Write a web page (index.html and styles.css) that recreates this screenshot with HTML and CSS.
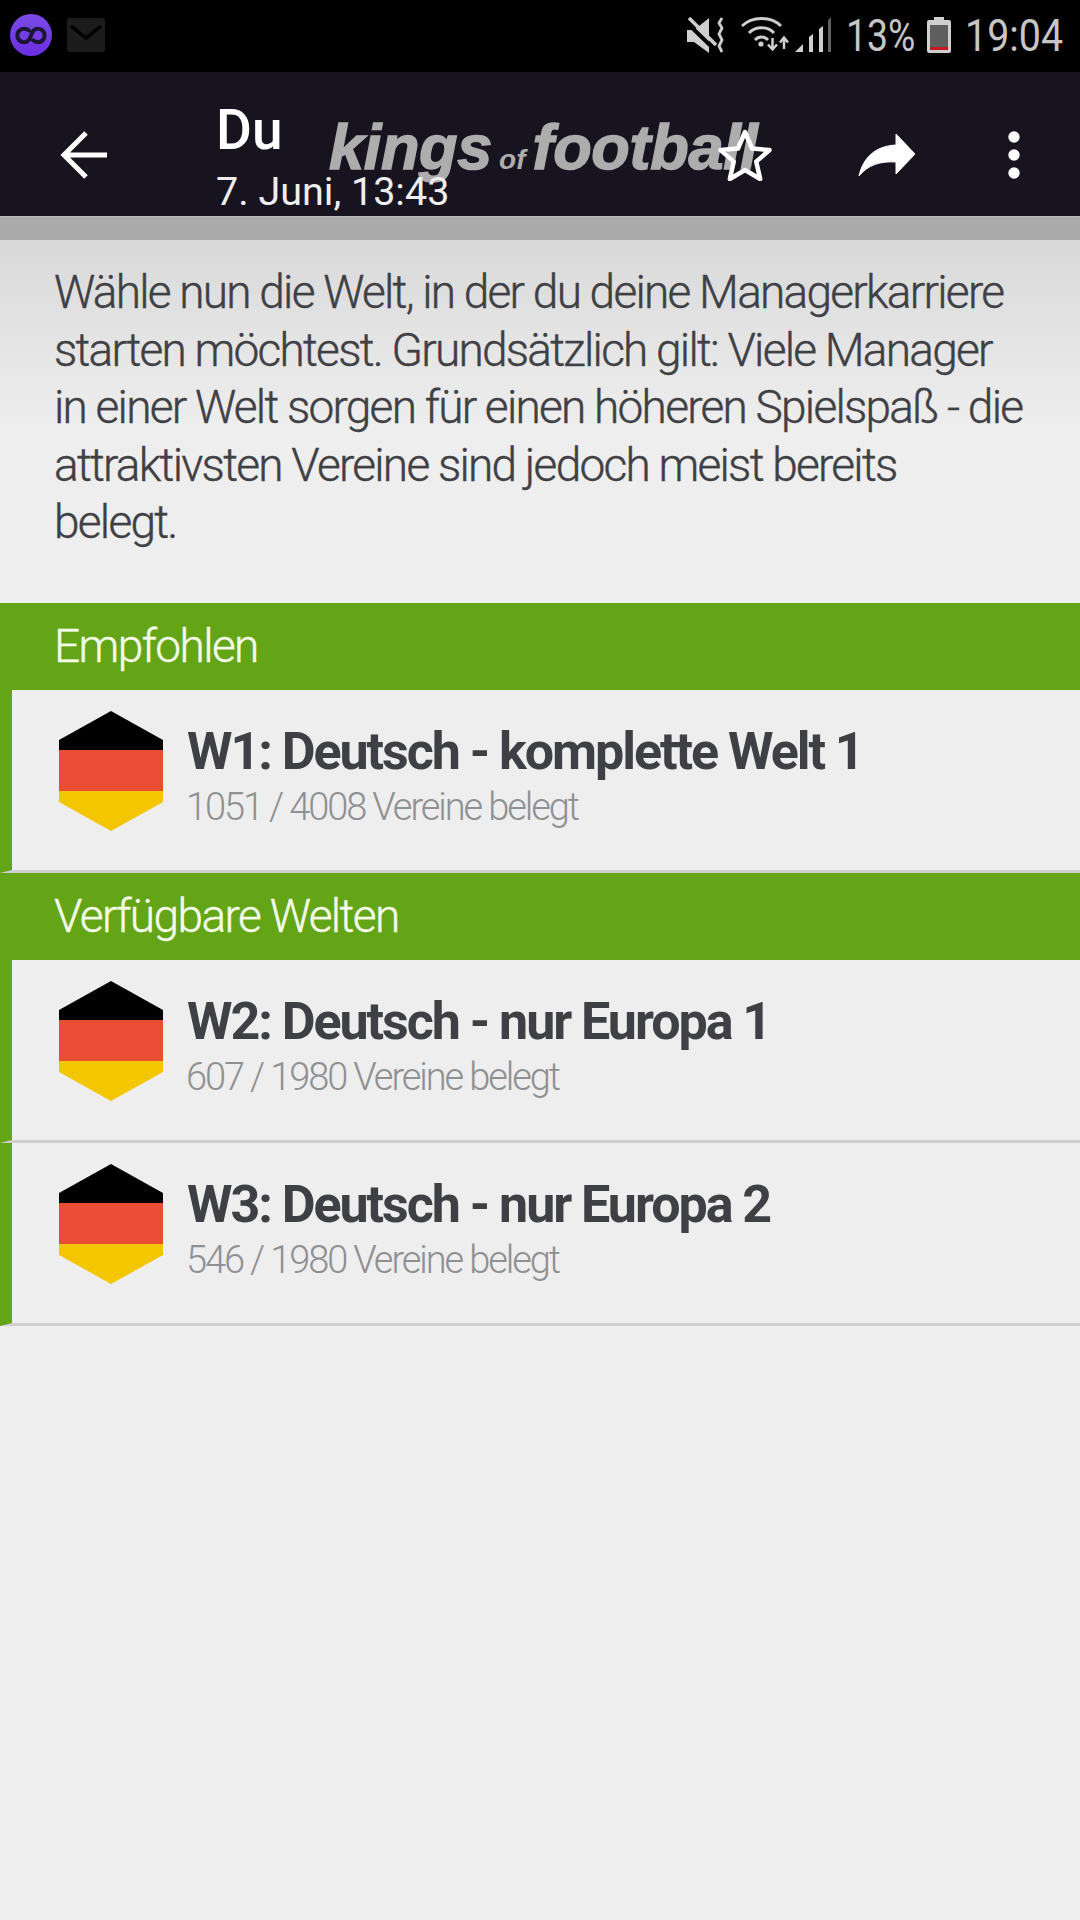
FILE: index.html
```html
<!DOCTYPE html>
<html lang="de">
<head>
<meta charset="utf-8">
<title>Welt wählen</title>
<link rel="stylesheet" href="styles.css">
</head>
<body>
<svg class="defs" width="0" height="0" aria-hidden="true">
  <symbol id="flag" viewBox="0 0 104 120">
    <polygon points="52,0 104,29 104,39 0,39 0,29" fill="#000"/>
    <rect x="0" y="39" width="104" height="41" fill="#e94e34"/>
    <polygon points="0,80 104,80 104,91 52,120 0,91" fill="#f4c600"/>
  </symbol>
</svg>
<div class="status">
  <div class="status-left">
    <svg class="ic-app" viewBox="0 0 42 42"><defs><linearGradient id="pg" x1="0" y1="0" x2="0" y2="1"><stop offset="0" stop-color="#7c4be8"/><stop offset="1" stop-color="#6a2fe0"/></linearGradient></defs><circle cx="21" cy="21" r="21" fill="url(#pg)"/><path d="M19 16.500C17.500 15.200 16 14.800 14 14.800a6.700 6.700 0 0 0 0 13.400C18 28.200 20 25 21 21.500S24 14.800 28 14.800a6.700 6.700 0 0 1 0 13.400C26 28.200 24.500 27.500 23 26.300" fill="none" stroke="#1c1534" stroke-width="4" stroke-linecap="round"/></svg>
    <svg class="ic-mail" viewBox="0 0 38 34"><rect width="38" height="34" rx="2" fill="#1c1c1c"/><path d="M4 8l15 12L34 8" fill="none" stroke="#000" stroke-width="3.500"/></svg>
  </div>
  <div class="status-right">
    <svg class="ic-mute" viewBox="0 0 38 36"><path d="M0 13h7L22 1v35L7 25H0z" fill="#cfcfcf"/><path d="M0 6l26 25" stroke="#000" stroke-width="4"/><path d="M2 1l27 27" stroke="#cfcfcf" stroke-width="3.500"/><path d="M35 1l-3 5 3 5-3 6 3 6-3 6 3 6" fill="none" stroke="#cfcfcf" stroke-width="2.800"/></svg>
    <svg class="ic-wifi" viewBox="0 0 49 36"><g fill="none" stroke="#cfcfcf" stroke-width="2.800"><path d="M1 9C11-1 30-1 40 9"/><path d="M8 16C14 9 27 9 33 16"/><path d="M14 23c3.500-4 9.500-4 13 0"/></g><circle cx="20" cy="27" r="2.600" fill="#cfcfcf"/><path d="M31.500 21v11M27 27.500l4.500 5 4.500-5" fill="none" stroke="#cfcfcf" stroke-width="2.500"/><path d="M43 32V21M39 25.500l4-5 4 5" fill="none" stroke="#cfcfcf" stroke-width="2.500"/></svg>
    <svg class="ic-signal" viewBox="0 0 37 36"><path d="M0 35l8-8v8z" fill="#cfcfcf"/><path d="M14 20l4-3v18h-4z" fill="#cfcfcf"/><path d="M24 12l4-3v26h-4z" fill="#cfcfcf"/><path d="M33 3l3-3v35h-3z" fill="#5f5f5f"/></svg>
    <span class="pct">13%</span>
    <svg class="ic-batt" viewBox="0 0 24 36"><path d="M7 0h10v3h5a2 2 0 0 1 2 2v29a2 2 0 0 1-2 2H2a2 2 0 0 1-2-2V5a2 2 0 0 1 2-2h5z" fill="#cfcfcf"/><rect x="3" y="8" width="18" height="25" fill="#5e5e5e"/><rect x="3" y="30" width="18" height="3" fill="#c8161c"/></svg>
    <span class="clock">19:04</span>
  </div>
</div>

<header class="appbar">
  <svg class="ic-back" viewBox="0 0 48 48"><path d="M47 24H4M26 2L4 24l22 22" fill="none" stroke="#fff" stroke-width="5"/></svg>
  <div class="who">
    <div class="who-name">Du</div>
    <div class="who-date">7. Juni, 13:43</div>
  </div>
  <svg class="ic-star" viewBox="0 0 54 52"><path d="M27 3l7 16.500 17.500 1.600-13.300 11.500 4 17.400L27 41l-15.200 9 4-17.400L2.500 21.100 20 19.500z" fill="none" stroke="#fff" stroke-width="4.500" stroke-linejoin="round"/></svg>
  <svg class="ic-share" viewBox="0 0 58 44"><path d="M38 1l19 20-19 20V29C22 28 10 32 1 43 5 25 17 13 38 12z" fill="#fff" stroke="#fff" stroke-width="1" stroke-linejoin="round"/></svg>
  <svg class="ic-more" viewBox="0 0 12 48"><circle cx="6" cy="6" r="5.700" fill="#fff"/><circle cx="6" cy="24" r="5.700" fill="#fff"/><circle cx="6" cy="42" r="5.700" fill="#fff"/></svg>
  <div class="logo"><span>kings</span><span class="logo-of">of</span><span>football</span></div>
</header>
<div class="shade"></div>

<main>
  <p class="intro">Wähle nun die Welt, in der du deine Managerkarriere starten möchtest. Grundsätzlich gilt: Viele Manager in einer Welt sorgen für einen höheren Spielspaß - die attraktivsten Vereine sind jedoch meist bereits belegt.</p>

  <section class="group">
    <h2 class="group-title">Empfohlen</h2>
    <div class="world">
      <svg class="flag"><use href="#flag"/></svg>
      <div class="world-text">
        <div class="world-name">W1: Deutsch - komplette Welt 1</div>
        <div class="world-count">1051 / 4008 Vereine belegt</div>
      </div>
    </div>
  </section>

  <section class="group">
    <h2 class="group-title">Verfügbare Welten</h2>
    <div class="world">
      <svg class="flag"><use href="#flag"/></svg>
      <div class="world-text">
        <div class="world-name">W2: Deutsch - nur Europa 1</div>
        <div class="world-count">607 / 1980 Vereine belegt</div>
      </div>
    </div>
    <div class="world">
      <svg class="flag"><use href="#flag"/></svg>
      <div class="world-text">
        <div class="world-name">W3: Deutsch - nur Europa 2</div>
        <div class="world-count">546 / 1980 Vereine belegt</div>
      </div>
    </div>
  </section>
</main>
</body>
</html>
```
FILE: styles.css
```css
* { box-sizing: border-box; }
html, body { margin: 0; padding: 0; }
body {
  width: 1080px;
  height: 1920px;
  overflow: hidden;
  background: #eeeeee;
  font-family: Roboto, "Liberation Sans", sans-serif;
  color: #3f4044;
}
.defs { position: absolute; }

.status {
  height: 72px;
  background: #000;
  display: flex;
  justify-content: space-between;
  align-items: flex-start;
  color: #c6c6c6;
}
.status-left { display: flex; align-items: center; gap: 15px; padding: 14px 0 0 10px; }
.ic-app { width: 42px; height: 42px; display: block; }
.ic-mail { width: 38px; height: 34px; display: block; }
.status-right { display: flex; align-items: center; padding: 17px 19px 0 0; height: 53px; }
.ic-mute { width: 38px; height: 36px; margin-right: 16px; flex: none; }
.ic-wifi { width: 49px; height: 36px; margin-right: 5px; flex: none; }
.ic-signal { width: 37px; height: 36px; margin-right: 14px; flex: none; }
.pct {
  font-size: 45px;
  line-height: 38px;
  width: 67px;
  padding-top: 2px;
  white-space: nowrap;
  transform-origin: left;
  transform: scaleX(.83);
  margin-right: 14px;
}
.ic-batt { width: 24px; height: 36px; margin-right: 14px; flex: none; }
.clock {
  font-size: 45px;
  line-height: 38px;
  width: 96px;
  padding-top: 2px;
  white-space: nowrap;
  transform-origin: left;
  transform: scaleX(.875);
}

.appbar {
  position: relative;
  height: 144px;
  padding-top: 22px;
  background: #18141f;
  display: flex;
  align-items: center;
  color: #fff;
}
.ic-back { width: 48px; height: 48px; margin-left: 60px; flex: none; }
.who { margin-left: 108px; flex: 1; position: relative; z-index: 1; align-self: flex-start; margin-top: 6px; }
.who-name { font-size: 55px; font-weight: 500; line-height: 60px; }
.who-date { font-size: 39.5px; line-height: 50px; margin-top: 7px; color: #eeeeee; }
.logo {
  position: absolute;
  left: 329px;
  top: 39px;
  display: flex;
  align-items: baseline;
  font-family: "Liberation Sans", sans-serif;
  font-style: italic;
  font-weight: 700;
  font-size: 63px;
  letter-spacing: -0.3px;
  -webkit-text-stroke: 1.5px #adadad;
  color: #adadad;
  line-height: 72px;
  white-space: nowrap;
}
.logo-of { font-size: 28px; font-weight: 700; letter-spacing: 0; -webkit-text-stroke: 0; margin: 0 7px 0 7px; }
.ic-star, .ic-share, .ic-more { position: relative; z-index: 1; flex: none; }
.ic-star { width: 54px; height: 52px; margin-right: 86px; }
.ic-share { width: 58px; height: 44px; margin-right: 92px; }
.ic-more { width: 12px; height: 48px; margin-right: 60px; }

.shade { height: 24px; background: #ababab; border-top: 1px solid #bdbdbd; }

main { display: block; }
.intro {
  margin: 0;
  height: 363px;
  padding: 24px 54px 0 54px;
  font-size: 46px;
  font-weight: 300;
  line-height: 57.5px;
  letter-spacing: -1.75px;
  -webkit-text-stroke: 0.4px #3f4044;
  color: #3f4044;
  background: linear-gradient(#d9d9d9, #eeeeee 52%);
}

.group { background: #63a516; }
.group-title {
  margin: 0;
  height: 87px;
  padding-left: 54px;
  font-size: 46px;
  font-weight: 300;
  line-height: 87px;
  letter-spacing: -1.6px;
  -webkit-text-stroke: 0.4px #f4fbe8;
  color: #f4fbe8;
}
.world {
  height: 183px;
  background: #eeeeee;
  display: flex;
  align-items: flex-start;
  padding: 21px 0 0 47px;
  border-left: 12px solid #63a516;
  border-bottom: 3px solid #cfcfcf;
}
.flag { width: 104px; height: 120px; flex: none; }
.world-text { margin-left: 24px; }
.world-name {
  font-size: 52px;
  font-weight: 700;
  line-height: 60px;
  letter-spacing: -2.05px;
  color: #3f4044;
  padding-top: 11px;
}
.world-count {
  font-size: 38px;
  font-weight: 300;
  line-height: 44px;
  letter-spacing: -2.1px;
  color: #8f9092;
  margin-top: 3px;
  margin-left: -1px;
}
```
